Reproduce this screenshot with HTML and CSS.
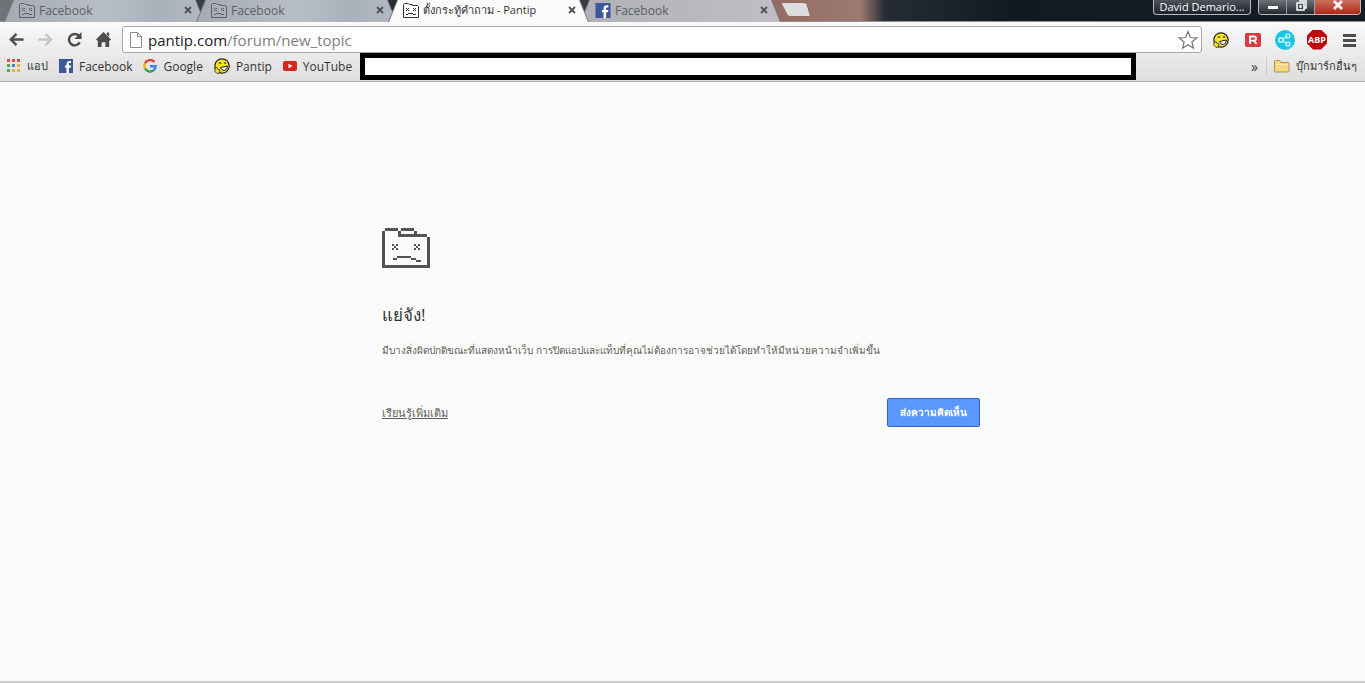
FILE: index.html
```html
<!DOCTYPE html>
<html lang="th">
<head>
    <meta charset="UTF-8">
    <meta name="viewport" content="width=device-width, initial-scale=1.0">
    <title>ตั้งกระทู้คำถาม - Pantip</title>
    <link rel="stylesheet" href="styles.css">
</head>
<body>
    <!-- Shared icons -->
    <svg class="sprite" aria-hidden="true">
        <symbol id="sad" viewBox="0 0 48 40">
            <path d="M0 3h3v34h42V9h3v31H0zM3 0h13v3H3zM19 0h13v3H19zM16 3h3v3h26v3H16zM32 3h3v3h-3z"/>
            <path d="M10 16h2v2h-2zM14 16h2v2h-2zM12 18h2v2h-2zM10 20h2v2h-2zM14 20h2v2h-2z"/>
            <path d="M32 16h2v2h-2zM36 16h2v2h-2zM34 18h2v2h-2zM32 20h2v2h-2zM36 20h2v2h-2z"/>
            <path d="M15 28h14v2H15zM11 30h4v2h-4zM29 30h5v2h-5zM34 32h5v2h-5z"/>
        </symbol>
        <symbol id="sad-small" viewBox="0 0 16 15">
            <path d="M.5 14.5V1.5l1-1h4l1 1h3v1h5l1 1v11z" fill="none" stroke="currentColor"/>
            <path d="M3 5h1v1H3zM5 5h1v1H5zM4 6h1v1H4zM3 7h1v1H3zM5 7h1v1H5zM10 5h1v1h-1zM12 5h1v1h-1zM11 6h1v1h-1zM10 7h1v1h-1zM12 7h1v1h-1zM5 10h5v1H5zM3 11h2v1H3zM10 11h3v1h-3z"/>
        </symbol>
        <symbol id="facebook" viewBox="0 0 14 14">
            <path fill="#3b5998" d="M0 0h14v14H0z"/>
            <path fill="#fff" d="M7.500 14V8.700H6V6.500h1.500V5c0-2 1.200-3 3-3H12v2.100h-1c-.8 0-1.100.3-1.100 1v1.400H12l-.3 2.200H9.900V14z"/>
        </symbol>
        <symbol id="smiley" viewBox="0 0 16 16">
            <circle cx="8" cy="8" r="7.200" fill="#fde428" stroke="#222" stroke-width="1.200"/>
            <path d="M5 5.500q1-1.500 2 0M10 5.500q1.200-1.500 2.200 0" fill="none" stroke="#222" stroke-width="1.200"/>
            <path d="M6.500 9.500l7-1.500q0 4-3.500 4.500-2.500 0-3.500-3z" fill="#fff" stroke="#222"/>
            <path d="M1 10.500l2-1 1 2 2 .5-.5 3-2.500.5-2-2z" fill="#fde428" stroke="#222" stroke-width=".8"/>
        </symbol>
        <symbol id="close" viewBox="0 0 8 8">
            <path d="M1 1l6 6M7 1L1 7" stroke="currentColor" stroke-width="1.800"/>
        </symbol>
    </svg>

    <header class="browser">
        <div class="tab-strip">
            <div class="tab">
                <svg class="tab-icon"><use href="#sad-small"/></svg>
                <button class="tab-title">Facebook</button>
                <button class="tab-close" aria-label="Close tab"><svg><use href="#close"/></svg></button>
            </div>
            <div class="tab">
                <svg class="tab-icon"><use href="#sad-small"/></svg>
                <button class="tab-title">Facebook</button>
                <button class="tab-close" aria-label="Close tab"><svg><use href="#close"/></svg></button>
            </div>
            <div class="tab active">
                <svg class="tab-icon"><use href="#sad-small"/></svg>
                <button class="tab-title">ตั้งกระทู้คำถาม - Pantip</button>
                <button class="tab-close" aria-label="Close tab"><svg><use href="#close"/></svg></button>
            </div>
            <div class="tab">
                <svg class="tab-icon"><use href="#facebook"/></svg>
                <button class="tab-title">Facebook</button>
                <button class="tab-close" aria-label="Close tab"><svg><use href="#close"/></svg></button>
            </div>
            <button class="new-tab" aria-label="New tab">
                <svg viewBox="0 0 32 16"><path d="M2 .5h22q2 0 3 2l3 10q1 2-1 2H10q-2 0-3-2L2 3q-1-2.500 0-2.500z" fill="#dedcdd" stroke="#8a6c66"/></svg>
            </button>

            <button class="account">David Demario...</button>
            <div class="window-buttons">
                <button class="win-btn" aria-label="Minimize">
                    <svg viewBox="0 0 12 12"><path d="M1 6h10v3H1z" fill="#fff"/></svg>
                </button>
                <button class="win-btn" aria-label="Restore">
                    <svg viewBox="0 0 12 12"><path d="M4 1h7v7H9M2 3h7v7H2zM5 6h1v1H5z" fill="none" stroke="#fff" stroke-width="1.500"/></svg>
                </button>
                <button class="win-btn win-close" aria-label="Close">
                    <svg viewBox="0 0 12 12"><path d="M2 1l8 8M10 1L2 9" stroke="#fff" stroke-width="2.600"/></svg>
                </button>
            </div>
        </div>

        <div class="toolbar">
            <button class="nav-btn" aria-label="Back">
                <svg viewBox="0 0 18 18"><path d="M16.500 9H3M9 3L3 9l6 6" fill="none" stroke="#4d4d4d" stroke-width="2.600"/></svg>
            </button>
            <button class="nav-btn" aria-label="Forward" disabled>
                <svg viewBox="0 0 18 18"><path d="M1.500 9H15M9 3l6 6-6 6" fill="none" stroke="#c6c6c6" stroke-width="2.400"/></svg>
            </button>
            <button class="nav-btn" aria-label="Reload">
                <svg viewBox="0 0 18 18"><path d="M14.500 12A6 6 0 1 1 13.500 5" fill="none" stroke="#4d4d4d" stroke-width="2.600"/><path d="M16.500 1v7.500H9z" fill="#4d4d4d"/></svg>
            </button>
            <button class="nav-btn" aria-label="Home">
                <svg viewBox="0 0 18 18"><path d="M9 1l8 8-1.500 1.200L15 10v7h-4v-5H7v5H3v-7l-.5.2L1 9zM12.500 1.500H15V6l-2.500-2z" fill="#4d4d4d"/></svg>
            </button>
            <div class="omnibox">
                <svg class="page-icon" viewBox="0 0 12 16"><path d="M.5.500h7l4 4v11H.5zM7.500.500v4h4" fill="#fff" stroke="#8c8c8c"/></svg>
                <label for="url">pantip.com</label>
                <input id="url" type="text" value="/forum/new_topic">
                <button class="star" aria-label="Bookmark this page">
                    <svg viewBox="0 0 20 20"><path d="M10 1.500l2.400 6 6.400.4-4.900 4.100 1.600 6.300-5.500-3.500-5.500 3.500 1.600-6.300-4.900-4.100 6.400-.4z" fill="#fff" stroke="#777" stroke-width="1.200"/></svg>
                </button>
            </div>
            <div class="extensions">
                <button aria-label="Pantip"><svg class="small"><use href="#smiley"/></svg></button>
                <button aria-label="R">
                    <svg class="small" viewBox="0 0 16 14"><rect width="16" height="14" rx="2" fill="#d8383f"/><path d="M5 11V3.500h4a2 2 0 0 1 0 4.100H5.500M9 7.600l2.500 3.400" fill="none" stroke="#fff" stroke-width="1.800"/></svg>
                </button>
                <button aria-label="Share">
                    <svg viewBox="0 0 20 20"><circle cx="10" cy="10" r="10" fill="#1cc4e6"/><path d="M12.500 6L7 10l5.500 4" fill="none" stroke="#d6f6fc" stroke-width="1.200"/><g fill="#1cc4e6" stroke="#d6f6fc" stroke-width="1.400"><circle cx="6" cy="10" r="2.300"/><circle cx="13" cy="6" r="1.900"/><circle cx="13" cy="14" r="1.900"/></g></svg>
                </button>
                <button class="abp">ABP</button>
                <button aria-label="Menu">
                    <svg class="small" viewBox="0 0 16 16"><path d="M2 2h13v3H2zM2 7h13v3H2zM2 12h13v3H2z" fill="#4d4d4d"/></svg>
                </button>
            </div>
        </div>

        <nav class="bookmarks">
            <a class="thai" href="#">
                <svg viewBox="0 0 14 14"><path fill="#d9503f" d="M0 0h3v3H0zM5 0h3v3H5zM10 0h3v3h-3z"/><path fill="#57a55a" d="M0 5h3v3H0z"/><path fill="#4a7fc9" d="M5 5h3v3H5z"/><path fill="#e2b13c" d="M10 5h3v3h-3zM5 10h3v3H5zM10 10h3v3h-3z"/><path fill="#57a55a" d="M0 10h3v3H0z"/></svg>
                แอป
            </a>
            <a href="#"><svg><use href="#facebook"/></svg>Facebook</a>
            <a href="#">
                <svg viewBox="0 0 14 14" fill="none" stroke-width="2.400"><path d="M11.400 3A5.600 5.600 0 0 0 2 4.500" stroke="#e34133"/><path d="M2 4.500a5.600 5.600 0 0 0 0 5" stroke="#f3b605"/><path d="M2 9.500A5.600 5.600 0 0 0 10.800 11.200" stroke="#32a350"/><path d="M10.800 11.200A5.400 5.400 0 0 0 12.600 7.200H7" stroke="#4081ec"/></svg>
                Google
            </a>
            <a href="#"><svg class="big"><use href="#smiley"/></svg>Pantip</a>
            <a href="#">
                <svg viewBox="0 0 14 14"><rect y="2" width="14" height="10" rx="2" fill="#d9251d"/><path d="M5.500 4.700v4.600l4-2.300z" fill="#fff"/></svg>
                YouTube
            </a>
            <div class="covered"></div>
            <button class="more">»</button>
            <a class="other thai" href="#">
                <svg class="big" viewBox="0 0 16 14"><path d="M.5 12V2.500q0-1 1-1h4l1.500 2h7q1 0 1 1V12q0 1-1 1h-12.500q-1 0-1-1z" fill="#f8d782" stroke="#b98b3c"/><path d="M1.500 5.500h13" stroke="#fdeebc"/></svg>
                บุ๊กมาร์กอื่นๆ
            </a>
        </nav>
    </header>

    <main>
        <div class="error">
            <svg class="sad-tab" role="img" aria-label="Crashed tab"><use href="#sad"/></svg>
            <h1>แย่จัง!</h1>
            <p>มีบางสิ่งผิดปกติขณะที่แสดงหน้าเว็บ การปิดแอปและแท็บที่คุณไม่ต้องการอาจช่วยได้โดยทำให้มีหน่วยความจำเพิ่มขึ้น</p>
            <div class="actions">
                <a href="#">เรียนรู้เพิ่มเติม</a>
                <button>ส่งความคิดเห็น</button>
            </div>
        </div>
    </main>
</body>
</html>
```
FILE: styles.css
```css
* {
    box-sizing: border-box;
}
body {
    display: flex;
    flex-direction: column;
    min-height: 100vh;
    margin: 0;
    font-family: 'Open Sans', 'Noto Sans', sans-serif;
    font-size: 12px;
    background-color: #fbfbfb;
    color: #333;
}
button, input {
    padding: 0;
    border: none;
    background: none;
    font: inherit;
    color: inherit;
}
svg {
    display: block;
    flex: none;
}
.sprite {
    position: absolute;
    width: 0;
    height: 0;
}

/* Tabs and window buttons */
.tab-strip {
    display: flex;
    align-items: flex-start;
    height: 22px;
    padding: 0 4px;
    background: linear-gradient(90deg, #6f7479 0, #3a4047 200px, #252c34 400px, #3f3a3d 590px, #946b60 770px, #9c7a70 860px, #262c34 885px, #121921 1010px, #141b23 100%);
    border-bottom: 1px solid #8d9095;
}
.tab {
    position: relative;
    z-index: 0;
    display: flex;
    align-items: center;
    flex: 0 1 206px;
    height: 22px;
    margin-right: -14px;
    padding: 0 18px 2px 15px;
    color: #5c5f63;
}
.tab::before,
.tab::after {
    content: "";
    position: absolute;
    z-index: -1;
    inset: 0;
    clip-path: polygon(9px 0, calc(100% - 14px) 0, calc(100% - 5px) 100%, 0 100%);
    background-color: #74797f;
}
.tab::after {
    inset: 0 1px;
    background: linear-gradient(90deg, #a6abb3, #b8bec6 50%, #a9b1ba 75%, #b4b9c0);
}
.tab:nth-child(4)::after {
    background: linear-gradient(90deg, #b0b1b8, #c0bec4);
}
.tab.active {
    z-index: 1;
    color: #333;
}
.tab.active .tab-title {
    font-size: 11px;
}
.tab.active::after {
    background: #fbfbfb;
}
.tab-icon {
    width: 16px;
    height: 15px;
    fill: currentColor;
}
.tab-title {
    flex: 1;
    margin-left: 4px;
    white-space: nowrap;
    text-align: left;
}
.tab-close svg {
    width: 8px;
    height: 8px;
    color: #4f5256;
}
.new-tab {
    margin: 2px 0 0 8px;
}
.new-tab svg {
    width: 32px;
    height: 16px;
}
.account {
    width: 98px;
    height: 15px;
    margin: 0 7px 0 auto;
    border: 1px solid #b9bdc2;
    border-top: none;
    border-radius: 0 0 4px 4px;
    background: linear-gradient(#4e545b, #1c222a);
    color: #fff;
    font-size: 11px;
    line-height: 14px;
    white-space: nowrap;
}
.window-buttons {
    display: flex;
    height: 15px;
    border: 1px solid #b9bdc2;
    border-top: none;
    border-radius: 0 0 4px 4px;
    overflow: hidden;
}
.win-btn {
    display: flex;
    justify-content: center;
    width: 28px;
    background: linear-gradient(#6d7278, #23292f);
    border-right: 1px solid #9a9ea3;
}
.win-btn svg {
    width: 12px;
    height: 12px;
}
.win-close {
    width: 45px;
    border-right: none;
    background: linear-gradient(#c9705f, #b02a16);
}

/* Address bar */
.toolbar {
    display: flex;
    align-items: center;
    height: 31px;
    padding: 4px 6px 0 8px;
    background: linear-gradient(#fafafa, #ebebeb);
}
.nav-btn {
    width: 18px;
    margin-right: 11px;
}
.nav-btn svg {
    width: 17px;
    height: 17px;
}
.omnibox {
    display: flex;
    align-items: center;
    flex: 1;
    height: 27px;
    margin-left: -2px;
    padding: 0 3px 0 7px;
    border: 1px solid #a9a9ad;
    border-radius: 3px;
    background-color: #fff;
    font-size: 15px;
    color: #222;
}
.page-icon {
    width: 12px;
    height: 16px;
    margin-right: 6px;
}
.omnibox input {
    flex: 1;
    min-width: 0;
    color: #808080;
    outline: none;
}
.star svg {
    width: 20px;
    height: 20px;
}
.extensions {
    display: flex;
    align-items: center;
    gap: 12px;
    margin-left: 9px;
}
.extensions button {
    display: flex;
    align-items: center;
    justify-content: center;
    width: 20px;
    height: 20px;
}
.extensions svg {
    width: 20px;
    height: 20px;
}
.extensions .small {
    width: 16px;
    height: 16px;
}
.extensions .abp {
    clip-path: polygon(30% 0, 70% 0, 100% 30%, 100% 70%, 70% 100%, 30% 100%, 0 70%, 0 30%);
    background-color: #c2060c;
    color: #fff;
    font-size: 9px;
    font-weight: bold;
}

/* Bookmarks bar */
.bookmarks {
    display: flex;
    align-items: center;
    height: 29px;
    padding: 0 8px 2px 7px;
    background: linear-gradient(#ebebeb, #dedede);
    border-bottom: 1px solid #adadad;
}
.bookmarks a {
    display: flex;
    align-items: center;
    gap: 6px;
    margin-right: 11px;
    color: #333;
    text-decoration: none;
    white-space: nowrap;
}
.bookmarks .thai {
    font-size: 11px;
}
.bookmarks svg {
    width: 14px;
    height: 14px;
}
.bookmarks .big {
    width: 16px;
    height: 16px;
}
.covered {
    flex: 1;
    height: 27px;
    margin: 0 115px 0 -3px;
    border: 5px solid #000;
    background-color: #fff;
}
.more {
    margin-right: 8px;
    font-size: 14px;
}
.bookmarks .other {
    margin-right: 0;
    padding-left: 7px;
    border-left: 1px solid #cfcfcf;
}

/* Crashed tab page */
main {
    flex: 1;
    padding: 146px 20px 0;
    border-bottom: 2px solid #ccc;
}
.error {
    max-width: 601px;
    margin: 0 auto;
}
.sad-tab {
    width: 48px;
    height: 40px;
    fill: #535353;
}
h1 {
    margin: 32px 0 0;
    font-size: 17px;
    font-weight: normal;
    line-height: 30px;
    color: #333;
}
.error p {
    margin: 10px 0 0;
    font-size: 10px;
    line-height: 20px;
    color: #5f5f58;
}
.actions {
    display: flex;
    align-items: center;
    justify-content: space-between;
    margin-top: 38px;
    font-size: 11px;
}
.actions a {
    color: #5f5f58;
}
.actions button {
    height: 29px;
    margin-right: 3px;
    padding: 0 12px;
    border: 1px solid #2f66c4;
    border-radius: 2px;
    background-color: #5a97ff;
    color: #fff;
    font-size: 10px;
    font-weight: bold;
    cursor: pointer;
}
```
